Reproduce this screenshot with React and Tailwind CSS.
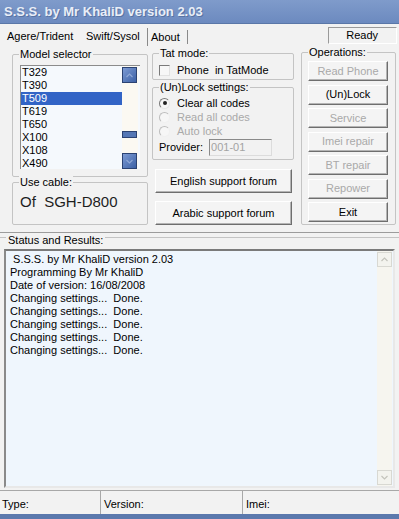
import React from "react";

const ScrollBlue = ({ down }) => (
  <div className="w-[15px] h-[16px] border border-[#2b4373] bg-linear-to-br from-[#7d9bd4] to-[#3d62a6] flex items-center justify-center">
    <svg width="7" height="5" viewBox="0 0 7 5">
      <path d={down ? "M0.5 1 L3.5 4 L6.5 1" : "M0.5 4 L3.5 1 L6.5 4"} stroke="#8fa8d6" strokeWidth="1.2" fill="none" />
    </svg>
  </div>
);

const GroupLabel = ({ children }) => (
  <div className="-mt-[7px] ml-[6px] px-[1px] bg-[#f2f2f2] w-fit leading-[13px] h-[13px]">{children}</div>
);

const Btn = ({ children, disabled, cls }) => (
  <div
    className={
      "flex items-center justify-center border border-t-white border-l-white border-r-[#6e6e6e] border-b-[#6e6e6e] shadow-[inset_-1px_-1px_0_#b4b4b4] bg-[#f4f4f4] " +
      (disabled ? "text-[#a9a9a9] " : "text-black ") +
      cls
    }
  >
    {children}
  </div>
);

const Radio = ({ checked, disabled, label }) => (
  <div className="flex items-center h-[14px]">
    <div
      className={
        "ml-[6px] w-[11px] h-[11px] rounded-full border flex items-center justify-center bg-[#f6f6f6] " +
        (disabled
          ? "border-t-[#bdbdbd] border-l-[#bdbdbd] border-r-[#f0f0f0] border-b-[#f0f0f0]"
          : "border-t-[#7a7a7a] border-l-[#7a7a7a] border-r-[#e6e6e6] border-b-[#e6e6e6]")
      }
    >
      {checked && <div className="w-[4px] h-[4px] rounded-full bg-[#222]" />}
    </div>
    <span className={"ml-[7px] " + (disabled ? "text-[#a9a9a9]" : "text-black")}>{label}</span>
  </div>
);

export default function App() {
  const models = ["T329", "T390", "T509", "T619", "T650", "X100", "X108", "X490"];
  const lines = [
    " S.S.S. by Mr KhaliD version 2.03",
    "Programming By Mr KhaliD",
    "Date of version: 16/08/2008",
    "Changing settings...  Done.",
    "Changing settings...  Done.",
    "Changing settings...  Done.",
    "Changing settings...  Done.",
    "Changing settings...  Done.",
  ];
  return (
    <div className="w-[399px] h-[519px] overflow-hidden bg-[#f2f2f2] text-[11px] leading-[13px] text-black font-['Liberation_Sans',Arial,sans-serif] flex flex-col">
      {/* Title bar */}
      <div className="h-[24px] shrink-0 bg-linear-to-b from-[#7f9bcb] to-[#6c8abf] border-b border-[#5a77a8] pl-[4px] flex items-center text-[13px] font-bold text-[#e9eef7] [text-shadow:1px_1px_0_#5873a3]">
        S.S.S. by Mr KhaliD version 2.03
      </div>

      {/* Tabs */}
      <div className="h-[22px] shrink-0 flex">
        <div className="w-[80px] pl-[7px] flex items-center pt-[2px]">Agere/Trident</div>
        <div className="w-[68px] pl-[6px] mt-[4px] border-r border-[#8a8a8a] flex items-start pt-[2px]">Swift/Sysol</div>
        <div className="w-[40px] pl-[3px] mt-[6px] mb-[2px] border-r border-[#8a8a8a] flex items-center">About</div>
        <div className="ml-auto mr-[2px] mt-[3px] h-[17px] w-[69px] border border-t-[#9a9a9a] border-l-[#9a9a9a] border-r-white border-b-white text-right pr-[18px] leading-[15px]">
          Ready
        </div>
      </div>

      {/* Main tab panel */}
      <div className="h-[187px] shrink-0 border-b border-[#9c9c9c] flex items-start pl-[12px]">
        {/* Left column */}
        <div className="w-[136px] flex flex-col mt-[8px]">
          <div className="h-[123px] border border-[#c4c4c4] rounded-[2px] flex flex-col">
            <GroupLabel>Model selector</GroupLabel>
            <div className="ml-[7px] mt-[4px] w-[120px] h-[104px] border-l border-t border-[#8c8c8c] bg-[#f5f9fd] flex overflow-hidden">
              <div className="w-[101px] flex flex-col">
                {models.map((m, i) => (
                  <div
                    key={m}
                    className={
                      "h-[13px] shrink-0 pl-[1px] " + (i === 2 ? "bg-[#3264c6] text-white" : "")
                    }
                  >
                    {m}
                  </div>
                ))}
              </div>
              <div className="w-[16px] flex flex-col bg-[#fbf9f2]">
                <div className="mt-[1px]"><ScrollBlue /></div>
                <div className="mt-[48px] w-[15px] h-[7px] border border-[#2b4373] bg-[#5477b5]" />
                <div className="mt-[15px]"><ScrollBlue down /></div>
              </div>
            </div>
          </div>
          <div className="mt-[5px] h-[43px] border border-[#c4c4c4] rounded-[2px] flex flex-col">
            <GroupLabel>Use cable:</GroupLabel>
            <div className="ml-[7px] mt-[4px] text-[15px] leading-[18px] whitespace-pre text-[#1e1e1e]">Of  SGH-D800</div>
          </div>
        </div>

        {/* Middle column */}
        <div className="ml-[4px] w-[142px] flex flex-col mt-[7px]">
          <div className="h-[27px] border border-[#c4c4c4] rounded-[2px] flex flex-col">
            <GroupLabel>Tat mode:</GroupLabel>
            <div className="mt-[4px] h-[13px] flex items-center">
              <div className="ml-[6px] w-[11px] h-[11px] border border-t-[#7a7a7a] border-l-[#7a7a7a] border-r-[#e2e2e2] border-b-[#e2e2e2] bg-[#f7f7f7]" />
              <span className="ml-[7px] whitespace-pre">Phone  in TatMode</span>
            </div>
          </div>
          <div className="mt-[7px] h-[73px] border border-[#c4c4c4] rounded-[2px] flex flex-col">
            <GroupLabel>(Un)Lock settings:</GroupLabel>
            <div className="mt-[2px] flex flex-col">
              <Radio checked label="Clear all codes" />
              <Radio disabled label="Read all codes" />
              <Radio disabled label="Auto lock" />
              <div className="h-[18px] flex items-center">
                <span className="ml-[6px]">Provider:</span>
                <div className="ml-[6px] w-[63px] h-[17px] border border-t-[#8a8a8a] border-l-[#8a8a8a] border-r-[#dcdcdc] border-b-[#dcdcdc] text-[#a3a3a3] pl-[1px] leading-[15px]">
                  001-01
                </div>
              </div>
            </div>
          </div>
          <div className="ml-[3px] mt-[9px] flex flex-col gap-[8px]">
            <Btn cls="w-[137px] h-[24px]">English support forum</Btn>
            <Btn cls="w-[137px] h-[24px]">Arabic support forum</Btn>
          </div>
        </div>

        {/* Right column */}
        <div className="ml-[7px] w-[95px] mt-[6px] h-[173px] border border-[#c4c4c4] rounded-[2px] flex flex-col">
          <GroupLabel>Operations:</GroupLabel>
          <div className="ml-[6px] mt-[2px] flex flex-col gap-[3.5px]">
            <Btn disabled cls="w-[80px] h-[20px]">Read Phone</Btn>
            <Btn cls="w-[80px] h-[20px]">(Un)Lock</Btn>
            <Btn disabled cls="w-[80px] h-[20px]">Service</Btn>
            <Btn disabled cls="w-[80px] h-[20px]">Imei repair</Btn>
            <Btn disabled cls="w-[80px] h-[20px]">BT repair</Btn>
            <Btn disabled cls="w-[80px] h-[20px]">Repower</Btn>
            <Btn cls="w-[80px] h-[20px]">Exit</Btn>
          </div>
        </div>
      </div>

      {/* Status group */}
      <div className="mt-[4px] shrink-0 border-t border-[#c4c4c4] flex flex-col">
        <div className="-mt-[4px] ml-[6px] px-[2px] bg-[#f2f2f2] w-fit h-[13px] leading-[13px]">Status and Results:</div>
        <div className="mt-[2px] ml-[4px] w-[391px] h-[239px] border-2 border-t-[#7a7a7a] border-l-[#8a8a8a] border-r-[#e8e8e8] border-b-[#e8e8e8] bg-[#eff6fd] flex">
          <div className="flex-1 pl-[4px] pt-[2px] flex flex-col">
            {lines.map((l, i) => (
              <div key={i} className="h-[13px] whitespace-pre">{l}</div>
            ))}
          </div>
          <div className="w-[15px] mr-[1px] bg-[#f6f5ef] flex flex-col justify-between py-[1px]">
            <div className="w-[15px] h-[15px] border border-[#d8d8d2] bg-[#f3f3ee] flex items-center justify-center">
              <svg width="7" height="5" viewBox="0 0 7 5">
                <path d="M0.5 4 L3.5 1 L6.5 4" stroke="#c4c4bc" strokeWidth="1.2" fill="none" />
              </svg>
            </div>
            <div className="w-[15px] h-[15px] border border-[#d8d8d2] bg-[#f3f3ee] flex items-center justify-center">
              <svg width="7" height="5" viewBox="0 0 7 5">
                <path d="M0.5 1 L3.5 4 L6.5 1" stroke="#c4c4bc" strokeWidth="1.2" fill="none" />
              </svg>
            </div>
          </div>
        </div>
      </div>

      {/* Status bar */}
      <div className="mt-[2px] h-[24px] shrink-0 flex border-t border-[#a8a8a8]">
        <div className="w-[100px] pl-[2px] flex items-center pt-[4px]">Type:</div>
        <div className="w-[142px] pl-[3px] border-l border-[#a8a8a8] flex items-center pt-[4px]">Version:</div>
        <div className="flex-1 pl-[3px] border-l border-[#a8a8a8] flex items-center pt-[4px]">Imei:</div>
      </div>
      <div className="h-[5px] shrink-0 bg-[#5b79ad]" />
    </div>
  );
}
